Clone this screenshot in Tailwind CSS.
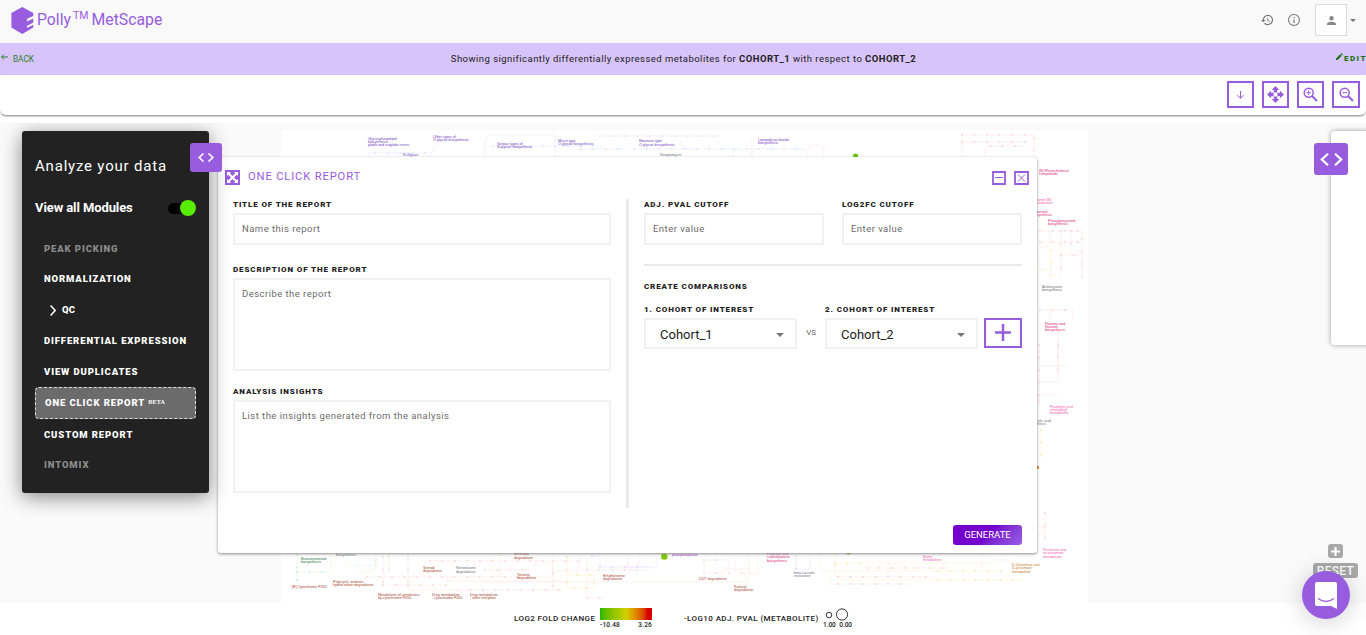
<!DOCTYPE html>
<html lang="en">
<head>
<meta charset="utf-8">
<title>Polly MetScape</title>
<script src="https://cdn.jsdelivr.net/npm/@tailwindcss/browser@4"></script>
</head>
<body class="relative flex h-[635px] w-[1366px] flex-col overflow-hidden bg-white font-['Roboto',sans-serif] text-[#222]">

<!-- App header -->
<header class="flex h-[43px] shrink-0 items-center justify-between bg-[#f9f9f9] pl-[11px] pr-[10px]">
  <div class="flex items-center gap-[3px] text-[#985ddf]">
    <svg class="mt-[-2px] h-[27px] w-[23px]" viewBox="0 0 23 27"><path fill="#985ddf" d="M11.3 0 22.3 6v3.600l-6.200 3.400v1.600l6.200-3v4l-6.200 3.400v1.600l6.200-3.200v3.200L11.300 27 .4 20.600V6z"/><path d="M16 12.800 22.500 9.700M16 20 22.500 16.800" stroke="#f9f9f9" stroke-width="1.500"/></svg>
    <div class="mt-[-4px] flex text-[15.800px] leading-5"><span>Polly</span><span class="ml-[2px] mt-[-4px] text-[10.500px]">TM</span><span class="ml-[3px]">MetScape</span></div>
  </div>
  <div class="mt-[-3px] flex items-center">
    <svg class="h-3 w-3" viewBox="1 2 21 20" fill="#777"><path d="M13 3a9 9 0 0 0-9 9H1l4 4 4-4H6a7 7 0 1 1 2.060 4.940l-1.420 1.420A9 9 0 1 0 13 3zm-1 5v5l4.280 2.540.720-1.210-3.500-2.080V8z"/></svg>
    <svg class="ml-[15px] h-3 w-3" viewBox="2 2 20 20" fill="#777"><path d="M11 7h2v2h-2zm0 4h2v6h-2zm1-9a10 10 0 1 0 0 20 10 10 0 0 0 0-20zm0 18.200a8.200 8.200 0 1 1 0-16.400 8.200 8.200 0 0 1 0 16.400z"/></svg>
    <div class="ml-[15px] flex h-8 w-8 items-center justify-center border border-[#d9d9d9] bg-white"><svg class="h-[9px] w-[9px]" viewBox="4 4 16 16" fill="#888"><path d="M12 12a4 4 0 1 0 0-8 4 4 0 0 0 0 8zm0 2c-2.670 0-8 1.340-8 4v2h16v-2c0-2.660-5.330-4-8-4z"/></svg></div>
    <svg class="ml-[3px] h-[3px] w-[6px]" viewBox="0 0 6 3"><path d="M0 0h6L3 3z" fill="#777"/></svg>
  </div>
</header>

<!-- Comparison banner -->
<section class="flex h-8 shrink-0 items-center justify-between bg-[#d7c4fa] pl-[1px]">
  <div class="flex w-24 items-center gap-[5px] text-[8.200px] text-[#2b8026]">
    <svg class="mt-[-3px] h-[6px] w-[7px]" viewBox="0 0 7 6" fill="none" stroke="#2b8026"><path d="M7 3H.6M3 .6.600 3 3 5.400"/></svg><span>BACK</span>
  </div>
  <p class="mt-px whitespace-nowrap text-[9.500px] tracking-[.46px]">Showing significantly differentially expressed metabolites for <b>COHORT_1</b> with respect to <b>COHORT_2</b></p>
  <div class="flex w-24 items-center justify-end text-[8px] font-black tracking-[1.500px] text-[#1b7416]">
    <svg class="mr-[1px] mt-[-5px] h-[7px] w-[7px]" viewBox="0 0 7 7" fill="#1b7416"><path d="M0 7V5.400L4.200 1.200 5.800 2.800 1.600 7zM4.700.7 5.400 0 7 1.600 6.300 2.300z"/></svg><span class="mr-[-1px]">EDIT</span>
  </div>
</section>

<!-- Map tools -->
<div class="flex h-[41px] shrink-0 items-start justify-end gap-2 rounded-md border-b border-[#aaa] bg-white pr-[6px] pt-[6px] shadow-[0_1px_1px_#ccc]">
  <div class="flex h-[27px] w-[27px] items-center justify-center border-2 border-[#985ddf]"><svg class="h-2 w-[7px]" viewBox="0 0 7 8" fill="none" stroke="#985ddf"><path d="M3.500 0v7M.3 4.200l3.200 3 3.200-3"/></svg></div>
  <div class="flex h-[27px] w-[27px] items-center justify-center border-2 border-[#985ddf]"><svg class="h-[17px] w-[17px]" viewBox="0 0 18 18" fill="#985ddf"><path d="M9 0l4 4.300h-2.200V7H7.200V4.300H5zM9 18l4-4.300h-2.200V11H7.200v2.700H5zM0 9l4.300-4v2.200H7v3.600H4.300V13zM18 9l-4.300-4v2.200H11v3.600h2.700V13z"/></svg></div>
  <div class="flex h-[27px] w-[27px] items-center justify-center border-2 border-[#985ddf]"><svg class="h-[15px] w-[15px]" viewBox="0 0 15 15" fill="none" stroke="#985ddf"><circle cx="5.700" cy="5.700" r="4.500" stroke-width="1.500"/><path d="M9 9l5 5" stroke-width="2"/><path d="M3.400 5.700h4.600M5.700 3.400v4.600"/></svg></div>
  <div class="flex h-[27px] w-[28px] items-center justify-center border-2 border-[#985ddf]"><svg class="h-[15px] w-[15px]" viewBox="0 0 15 15" fill="none" stroke="#985ddf"><circle cx="5.700" cy="5.700" r="4.500" stroke-width="1.500"/><path d="M9 9l5 5" stroke-width="2"/><path d="M3.400 5.700h4.600"/></svg></div>
</div>

<main class="relative mt-[7px] h-[480px] shrink-0 overflow-hidden bg-[#fafafa]">
  <!-- Metabolic pathway map, in page coordinates -->
  <svg class="absolute inset-0 h-full w-full" viewBox="0 123 1366 480" font-family="Liberation Sans, sans-serif" font-size="3.650">
    <rect x="281" y="130" width="807" height="473" fill="#fff"/>
    <g fill="none" stroke-width=".6">
      <g stroke="#e6eafc"><path d="M368 153h60q7 0 7-7M485 155V141q0-6 8-6h60M555 134v24M493 146h110M580 149h45M600 136h120M634 149h170M681 141q0 8 8 8M752 140v17M733 157v-4q0-5 6-5"/></g>
      <g stroke="#fde6ea"><path d="M962 157V135h72v22M962 142h66M985 157v-6q0-5 5-5h36M808 157v-7q0-5 5-5h5q6 0 6 5v7M1040 231h42v47M1040 242h42M1040 248q10 0 10-7v-10M1061 231v47M1071 231v24M1061 255h21M1040 310h33M1050 310v20M1058 332v20M1073 310v10M1058 340v42h-18M1040 366h28M1039 345v60q0-14-6-14M1045 513v27M1035 527h10q0 8-10 8M1039 395h18M1058 345v32"/></g>
      <g stroke="#fbe8e5"><path d="M383 557v28M408 557v32M383 585h65M408 590h155M430 561h115q8 0 8 8v8H367M447 576v5h115M475 560v17M500 557v20q-10-2-10-12t12-10M485 570h45q6 0 6-8v-6M553 555v35M553 561h25v10h-28M587 556v42h18M587 570h62M640 556q0 14-12 14M704 560v13M704 560h25q0 10-8 13H704M735 560v13M749 555v19h9v-19M749 574v-5h-25M483 582h265q0-10-8-10M830 577v7h80M838 577h95M888 560v18M867 568h80M982 556v12M993 560h20"/></g>
      <g stroke="#fdf1cf"><path d="M567 557v31h27v-13h-27M835 555v8h165M820 555v10q0 6 7 6h175M835 564v8q0 8 8 8h180M1051 250v28M1040 262v8h11M1041 430v28"/></g>
      <g stroke="#e2f6e4"><path d="M297 555v27M331 555v17h-34M348 557v5q0 4 7 4h21M376 555v10q0 7-9 7t-9-7q0-7 9-7t9 7M389 555v15"/></g>
      <g stroke="#f0e2fb"><path d="M592 556h8v11h50M628 556v12M657 556v11h-30M580 555v10M796 556v13h14v-13"/></g>
    </g>
    <g fill="none" stroke-width="1.800" stroke-linecap="round" stroke-dasharray="0 12.500">
      <path stroke="#dfe5fc" d="M375 153h60M493 146h110M580 149h45M600 136h120M634 149h170"/>
      <path stroke="#fbd5de" d="M962 135h72v22M962 142h66M990 146h36M1040 231h42v47M1040 242h42M1061 231v47M1071 231v24M1040 310h33M1058 332v50M1039 345v60M1045 513v27M1061 255h21"/>
      <path stroke="#f8d8d4" d="M383 557v28M408 557v32M383 585h65M458 590h105M430 561h115M367 577h170M485 570h45M553 561h25v10M587 570h62M587 598h18M704 560h25M704 573h50M838 577h95M838 584h72M867 568h80M553 561v29"/>
      <path stroke="#fce8b6" d="M567 557v31h27v-13h-27M835 564h33M938 571h64M938 580h86M1051 250v28M1041 430v28"/>
      <path stroke="#d0eed5" d="M297 555v27M297 572h34M376 560v10M389 557v13"/>
      <path stroke="#e8d2f8" d="M592 556h8M600 567h50M796 556v13"/>
    </g>
    <g fill="#7040c4">
      <text x="368" y="140">Glycosphingolipid<tspan x="368" dy="3">biosynthesis -</tspan><tspan x="368" dy="3">globo and isoglobo series</tspan></text>
      <text x="403" y="156">N-Glycan</text>
      <text x="433" y="138">Other types of<tspan x="433" dy="3">O-glycan biosynthesis</tspan></text>
      <text x="497" y="145">Various types of<tspan x="497" dy="3">N-glycan biosynthesis</tspan></text>
      <text x="558" y="142">Mucin type<tspan x="558" dy="3">O-glycan biosynthesis</tspan></text>
      <text x="639" y="142">Mannose type<tspan x="639" dy="4">O-glycan biosynthesis</tspan></text>
      <text x="758" y="141">Lipopolysaccharide<tspan x="758" dy="3">biosynthesis</tspan></text>
    </g>
    <g fill="#687078"><text x="660" y="156">Streptomycin</text><text x="336" y="556">biosynthesis</text><text x="456" y="569">Nitrotoluene<tspan x="456" dy="4">degradation</tspan></text><text x="794" y="574">beta-Lactam<tspan x="794" dy="3">resistance</tspan></text><text x="1042" y="288">Anthocyanin<tspan x="1042" dy="3">biosynthesis</tspan></text><text x="1031" y="422">mycolic acid<tspan x="1031" dy="3">synthesis</tspan></text></g>
    <g fill="#dc2878">
      <text x="1039" y="172">(B) Phytochemical<tspan x="1039" dy="3">compounds</tspan></text>
      <text x="1048" y="222">Phenylpropanoid<tspan x="1048" dy="3">biosynthesis</tspan></text>
      <text x="1032" y="213">terpenoid<tspan x="1032" dy="3">biosynthesis</tspan></text>
      <text x="1045" y="325">Flavone and<tspan x="1045" dy="3">flavonol</tspan><tspan x="1045" dy="3">biosynthesis</tspan></text>
      <text x="767" y="555">Penicillin and<tspan x="767" dy="3.300">cephalosporin</tspan><tspan x="767" dy="3.300">biosynthesis</tspan></text>
    </g>
    <g fill="#f45fb0">
      <text x="1034" y="201">Vitamin B6<tspan x="1034" dy="3">metabolism</tspan></text>
      <text x="1050" y="408">Porphyrin and<tspan x="1050" dy="3">chlorophyll</tspan><tspan x="1050" dy="3">metabolism</tspan></text>
      <text x="1043" y="551">Nicotinate and<tspan x="1043" dy="3.300">nicotinamide</tspan><tspan x="1043" dy="3.300">metabolism</tspan></text>
      <text x="923" y="558">Biotin<tspan x="923" dy="3">metabolism</tspan></text>
    </g>
    <g fill="#a9442e">
      <text x="292" y="588">[R] Cytochrome P450</text>
      <text x="333" y="583">Polycyclic aromatic<tspan x="333" dy="3">hydrocarbon degradation</tspan></text>
      <text x="378" y="596">Metabolism of xenobiotics<tspan x="378" dy="3">by cytochrome P450</tspan></text>
      <text x="432" y="596">Drug metabolism<tspan x="432" dy="3">- cytochrome P450</tspan></text>
      <text x="470" y="596">Drug metabolism<tspan x="470" dy="3">- other enzymes</tspan></text>
      <text x="423" y="569">Steroid<tspan x="423" dy="3">degradation</tspan></text>
      <text x="514" y="555">Benzoate<tspan x="514" dy="4">degradation</tspan></text>
      <text x="517" y="576">Toluene<tspan x="517" dy="3">degradation</tspan></text>
      <text x="603" y="577">Ethylbenzene<tspan x="603" dy="3">degradation</tspan></text>
      <text x="699" y="580">DDT degradation</text>
      <text x="734" y="588">Furfural<tspan x="734" dy="3">degradation</tspan></text>
    </g>
    <text x="301" y="560" fill="#22733a">Brassinosteroid<tspan x="301" dy="3">biosynthesis</tspan></text>
    <text x="672" y="556" fill="#a12bc8">phosphorylation</text>
    <text x="1012" y="566" fill="#d07c25">D-Glutamine and<tspan x="1012" dy="3.300">D-glutamate</tspan><tspan x="1012" dy="3.300">metabolism</tspan></text>
    <rect x="1037" y="466" width="2" height="3" fill="#e87b3d"/>
    <circle cx="664.300" cy="556.500" r="3.200" fill="#7ec800"/><circle cx="855.500" cy="156" r="2.500" fill="#5ac500"/><circle cx="848.500" cy="552" r="2.500" fill="#5ac500"/>
  </svg>

  <!-- Right drawer -->
  <div class="absolute left-[1331px] top-2 h-[214px] w-10 rounded bg-white shadow-[0_0_5px_#999]"></div>
  <div class="absolute left-[1314px] top-5 flex h-8 w-[34px] items-center justify-center rounded-[3px] bg-[#985ddf]"><svg class="h-[13px] w-[23px]" viewBox="0 0 23 13" fill="none" stroke="#fff" stroke-width="2.200"><path d="M8 .8 1.800 6.500 8 12.200M15 .8l6.200 5.700L15 12.200"/></svg></div>

  <!-- Map zoom controls -->
  <div class="absolute left-[1328px] top-[421px] flex h-[14px] w-[15px] items-center justify-center rounded-[3px] bg-[#a9a9a9]"><svg class="h-[9px] w-[9px]" viewBox="0 0 9 9" stroke="#fff" stroke-width="2.200"><path d="M0 4.500h9M4.500 0v9"/></svg></div>
  <div class="absolute left-[1313px] top-[440px] flex h-[15px] w-[45px] items-center justify-center rounded-[3px] bg-[#a9a9a9] text-[12px] font-medium leading-none text-white"><span class="mt-px tracking-[.3px]">RESET</span></div>

  <!-- Report dialog -->
  <section class="absolute left-[218px] top-[34px] flex h-[396px] w-[819px] flex-col rounded-[3px] bg-white shadow-[0_1px_3px_#888]">
    <div class="flex h-[42px] shrink-0 items-center pl-[7px] pr-[8px] pb-px">
      <svg class="h-[15px] w-[15px]" viewBox="0 0 15 15"><path d="M0 0h15v15H0z" fill="#985ddf"/><path d="M2 2h4L2 6zM13 2v4L9 2zM2 13V9l4 4zM13 13H9l4-4z" fill="#fff"/><path d="M3 3l9 9M12 3l-9 9" stroke="#fff" stroke-width="2.200"/></svg>
      <h2 class="ml-2 text-[11.200px] tracking-[.850px] text-[#985ddf]">ONE CLICK REPORT</h2>
      <svg class="ml-auto h-[14px] w-[14px]" viewBox="0 0 14 14" fill="none" stroke="#985ddf"><path d="M1 1h12v12H1z" stroke-width="1.800"/><path d="M3 6.500h8"/></svg>
      <svg class="ml-2 h-[14px] w-[15px]" viewBox="0 0 15 14" fill="none" stroke="#985ddf"><path d="M1 1h13v12H1z" stroke-width="1.800"/><path d="M4 3.500l7 7M11 3.500l-7 7"/></svg>
    </div>
    <div class="flex h-[309px] shrink-0 pl-[15px] text-[8px] font-black tracking-[.87px]">
      <div class="flex w-[378px] flex-col">
        <label class="h-[14px] pt-px leading-[10px]">TITLE OF THE REPORT</label>
        <div class="h-8 border-2 border-[#f1f1f1] pl-[7px] pt-[7px] text-[9.500px] font-normal leading-[14px] tracking-[.46px] text-[#6c6c6c]">Name this report</div>
        <label class="mt-[19px] h-[14px] pt-px leading-[10px]">DESCRIPTION OF THE REPORT</label>
        <div class="h-[93px] border-2 border-[#f1f1f1] pl-[7px] pt-[7px] text-[9.500px] font-normal leading-[14px] tracking-[.46px] text-[#6c6c6c]">Describe the report</div>
        <label class="mt-[15px] h-[14px] pt-px leading-[10px]">ANALYSIS INSIGHTS</label>
        <div class="h-[93px] border-2 border-[#f1f1f1] pl-[7px] pt-[7px] text-[9.500px] font-normal leading-[14px] tracking-[.46px] text-[#6c6c6c]">List the insights generated from the analysis</div>
      </div>
      <div class="ml-[15px] w-[3px] bg-[#e9e9e9]"></div>
      <div class="ml-[15px] flex w-[378px] flex-col">
        <div class="flex gap-[18px]">
          <div class="flex w-[180px] flex-col"><label class="h-[14px] pt-px leading-[10px]">ADJ. PVAL CUTOFF</label><div class="h-8 border-2 border-[#f1f1f1] pl-[7px] pt-[7px] text-[9.500px] font-normal leading-[14px] tracking-[.46px] text-[#6c6c6c]">Enter value</div></div>
          <div class="flex w-[180px] flex-col"><label class="h-[14px] pt-px leading-[10px]">LOG2FC CUTOFF</label><div class="h-8 border-2 border-[#f1f1f1] pl-[7px] pt-[7px] text-[9.500px] font-normal leading-[14px] tracking-[.46px] text-[#6c6c6c]">Enter value</div></div>
        </div>
        <div class="mt-[19px] h-[2px] bg-[#e9e9e9]"></div>
        <h3 class="mt-[15px] h-[23px] pt-px leading-[10px]">CREATE COMPARISONS</h3>
        <div class="flex">
          <div class="flex w-[153px] flex-col"><label class="h-[14px] pt-px leading-[10px]">1. COHORT OF INTEREST</label><div class="flex h-[31px] items-center justify-between border-2 border-[#f1f1f1] pl-[14px] pr-[11px] text-[13px] font-normal tracking-normal"><span class="mt-[2px]">Cohort_1</span><svg class="mt-[3px] h-1 w-2" viewBox="0 0 8 4"><path d="M0 0h8L4 4z" fill="#777"/></svg></div></div>
          <span class="mt-6 w-[28px] text-center text-[8px] font-normal leading-[10px] tracking-[-.1px] text-[#666]">VS</span>
          <div class="flex w-[153px] flex-col"><label class="h-[14px] pt-px leading-[10px]">2. COHORT OF INTEREST</label><div class="flex h-[31px] items-center justify-between border-2 border-[#f1f1f1] pl-[14px] pr-[11px] text-[13px] font-normal tracking-normal"><span class="mt-[2px]">Cohort_2</span><svg class="mt-[3px] h-1 w-2" viewBox="0 0 8 4"><path d="M0 0h8L4 4z" fill="#777"/></svg></div></div>
          <div class="ml-[6px] mt-[14px] flex h-[30px] w-[38px] items-center justify-center border-2 border-[#985ddf]"><svg class="mt-[-2px] h-[17px] w-4" viewBox="0 0 16 17" stroke="#985ddf" stroke-width="2.500"><path d="M0 8.500h16M8 0v17"/></svg></div>
        </div>
      </div>
    </div>
    <div class="ml-[735px] mt-[17px] flex h-5 w-[69px] items-center justify-center rounded-[3px] bg-linear-135 from-[#7300cc] from-50% to-[#9b5de5] text-[9.500px] text-white">GENERATE</div>
  </section>

  <!-- Module list -->
  <aside class="absolute left-[22px] top-2 flex h-[362px] w-[187px] flex-col rounded-[3px] bg-[#222] text-white shadow-[0_4px_20px_#0007]">
    <h1 class="ml-[13px] mt-[25px] text-[15px] leading-5 tracking-[.8px]">Analyze your data</h1>
    <div class="ml-[13px] mr-[13px] mt-[22px] flex h-5 items-center justify-between">
      <span class="text-[13px] font-bold tracking-[-.1px]">View all Modules</span>
      <span class="flex h-[11px] w-[28px] items-center justify-end rounded-full bg-black"><span class="h-4 w-4 shrink-0 rounded-full bg-[#59ee00]"></span></span>
    </div>
    <nav class="flex flex-col px-[13px] pt-[16px] text-[9.500px] font-black tracking-[.88px]">
      <a class="flex h-[30px] items-center pl-[9px] text-[#8b8b8b]">PEAK PICKING</a>
      <a class="flex h-[31px] items-center pl-[9px]">NORMALIZATION</a>
      <a class="flex h-[31px] items-center gap-[6px] pl-[15px]"><svg class="h-[11px] w-[6px]" viewBox="0 0 6 11" fill="none" stroke="#fff" stroke-width="1.500"><path d="M.6.600 5.200 5.500.6 10.400"/></svg><span class="tracking-[.3px]">QC</span></a>
      <a class="flex h-[31px] items-center whitespace-nowrap pl-[9px]">DIFFERENTIAL EXPRESSION</a>
      <a class="flex h-[30px] items-center pl-[9px] pt-px">VIEW DUPLICATES</a>
      <a class="flex h-[32px] items-center rounded-[4px] border border-dashed border-[#ddd] bg-[#6b6b6b] pl-[9px]"><span class="whitespace-nowrap">ONE CLICK REPORT</span><span class="ml-[3px] mt-[-2px] font-['Liberation_Serif',serif] text-[6px] font-bold tracking-[.3px]">BETA</span></a>
      <a class="flex h-[31px] items-center pl-[9px] pt-px">CUSTOM REPORT</a>
      <a class="flex h-[30px] items-center pl-[9px] text-[#8b8b8b]">INTOMIX</a>
    </nav>
  </aside>
  <div class="absolute left-[190px] top-5 flex h-[29px] w-8 items-center justify-center rounded-[3px] bg-[#985ddf]"><svg class="h-[9px] w-4" viewBox="0 0 16 9" fill="none" stroke="#fff" stroke-width="1.600"><path d="M5.500.5 1.200 4.500l4.300 4M10.500.5l4.300 4-4.300 4"/></svg></div>
</main>

<!-- Colour and size legend -->
<footer class="flex h-8 shrink-0 items-start pl-[514px] pt-[5px] text-[8px] font-medium tracking-[.4px]">
  <span class="mt-[6px] w-[86px] whitespace-nowrap leading-[10px]">LOG2 FOLD CHANGE</span>
  <div class="w-[52px]">
    <div class="h-3 bg-linear-to-r from-[#20b800] via-[#d0d000] to-[#d90000] to-90%"></div>
    <div class="mt-px flex justify-between text-[6.500px] leading-[8px] tracking-[.2px]"><span>-10.48</span><span>3.26</span></div>
  </div>
  <span class="ml-8 mt-[6px] w-[139px] whitespace-nowrap leading-[10px]">-LOG10 ADJ. PVAL (METABOLITE)</span>
  <div class="w-[29px]">
    <svg class="h-[13px] w-[29px]" viewBox="0 0 29 13" fill="none" stroke="#333"><circle cx="6" cy="7" r="2.800"/><circle cx="19" cy="6.500" r="5.600"/></svg>
    <div class="flex justify-between text-[6.500px] leading-[8px] tracking-[-.05px]"><span>1.00</span><span>0.00</span></div>
  </div>
</footer>

<!-- Chat launcher -->
<div class="absolute left-[1302px] top-[571px] flex h-12 w-12 items-center justify-center rounded-full bg-[#985ddf] shadow-[0_2px_24px_#0003]"><svg class="h-[27px] w-[22px]" viewBox="0 0 22 27"><path d="M2 0h18q2 0 2 2v25l-6-3H2q-2 0-2-2V2q0-2 2-2z" fill="#fff"/><path d="M3 16.500q8 6 16 0" fill="none" stroke="#985ddf" stroke-width="1.300"/></svg></div>
</body>
</html>
